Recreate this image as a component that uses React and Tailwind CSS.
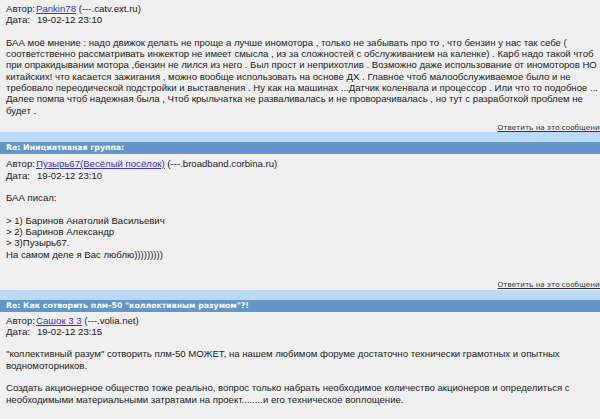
import React from "react";

const body = { fontFamily: '"Liberation Sans", Arial, sans-serif' };
const head = { fontFamily: '"DejaVu Sans", Verdana, sans-serif' };

function Meta({ author, host, date }) {
  return (
    <div>
      <div className="flex">
        <span className="w-[30px] shrink-0">Автор:</span>
        <span>
          <a className="text-[#3434c8] underline">{author}</a> ({host})
        </span>
      </div>
      <div className="flex">
        <span className="w-[31px] shrink-0">Дата:</span>
        <span>{date}</span>
      </div>
    </div>
  );
}

function Lines({ lines }) {
  return (
    <div>
      {lines.map((l, i) =>
        l === "" ? (
          <div key={i} className="h-[11.3px]" />
        ) : (
          <div key={i} className="whitespace-nowrap">
            {l}
          </div>
        )
      )}
    </div>
  );
}

function Reply({ extra }) {
  return (
    <div
      className={(extra ? "pt-[7px] h-[18.3px]" : "pt-[5px] h-[16.3px]") + " text-right leading-[11.3px]"}
      style={head}
    >
      <a className="text-[7.2px] text-[#333] underline whitespace-nowrap">Ответить на это сообщение</a>
    </div>
  );
}

function Header({ title }) {
  return (
    <div>
      <div className="h-[10px] bg-[#b9dbf8]" />
      <div
        className="h-[12px] bg-[#6397c9] text-white font-bold text-[7.8px] leading-[12px] pl-[6px] whitespace-nowrap"
        style={head}
      >
        {title}
      </div>
    </div>
  );
}

export default function App() {
  return (
    <div className="w-[600px] h-[419px] overflow-hidden bg-[#f0f0f0]">
      <div className="w-[604px] text-[9.6px] leading-[11.3px] text-[#222]" style={body}>
        <div className="pl-[6px] pt-[3px]">
          <Meta author="Pankin78" host="---.catv.ext.ru" date="19-02-12 23:10" />
          <div className="h-[11.3px]" />
          <Lines
            lines={[
              "БАА моё мнение : надо движок делать не проще а лучше иномотора , только не забывать про то , что бензин у нас так себе (",
              "соответственно рассматривать инжектор не имеет смысла , из за сложностей с обслуживанием на каленке) . Карб надо такой чтоб",
              "при опракидывании мотора ,бензин не лился из него . Был прост и неприхотлив . Возможно даже использование от иномоторов НО не",
              "китайских! что касается зажигания , можно вообще использовать на основе ДХ . Главное чтоб малообслуживаемое было и не",
              "требовало переодической подстройки и выставления . Ну как на машинах ...Датчик коленвала и процессор . Или что то подобное ...",
              "Далее помпа чтоб надежная была , Чтоб крыльчатка не разваливалась и не проворачивалась , но тут с разработкой проблем не",
              "будет .",
            ]}
          />
          <Reply />
        </div>
        <Header title="Re: Инициативная группа:" />
        <div className="pl-[6px] pt-[4px]">
          <Meta author="Пузырь67(Весёлый посёлок)" host="---.broadband.corbina.ru" date="19-02-12 23:10" />
          <div className="h-[11.3px]" />
          <Lines
            lines={[
              "БАА писал:",
              "",
              "> 1) Баринов Анатолий Васильевич",
              "> 2) Баринов Александр",
              "> 3)Пузырь67.",
              "На самом деле я Вас люблю)))))))))",
              "",
            ]}
          />
          <Reply extra />
        </div>
        <Header title={'Re: Как сотворить плм-50 "коллективным разумом"?!'} />
        <div className="pl-[6px] pt-[3px]">
          <Meta author="Сашок 3 3" host="---.volia.net" date="19-02-12 23:15" />
          <div className="h-[11.3px]" />
          <Lines
            lines={[
              "\"коллективный разум\" сотворить плм-50 МОЖЕТ, на нашем любимом форуме достаточно технически грамотных и опытных",
              "водномоторников.",
              "",
              "Создать акционерное общество тоже реально, вопрос только набрать необходимое количество акционеров и определиться с",
              "необходимыми материальными затратами на проект........и его техническое воплощение.",
            ]}
          />
        </div>
      </div>
    </div>
  );
}
